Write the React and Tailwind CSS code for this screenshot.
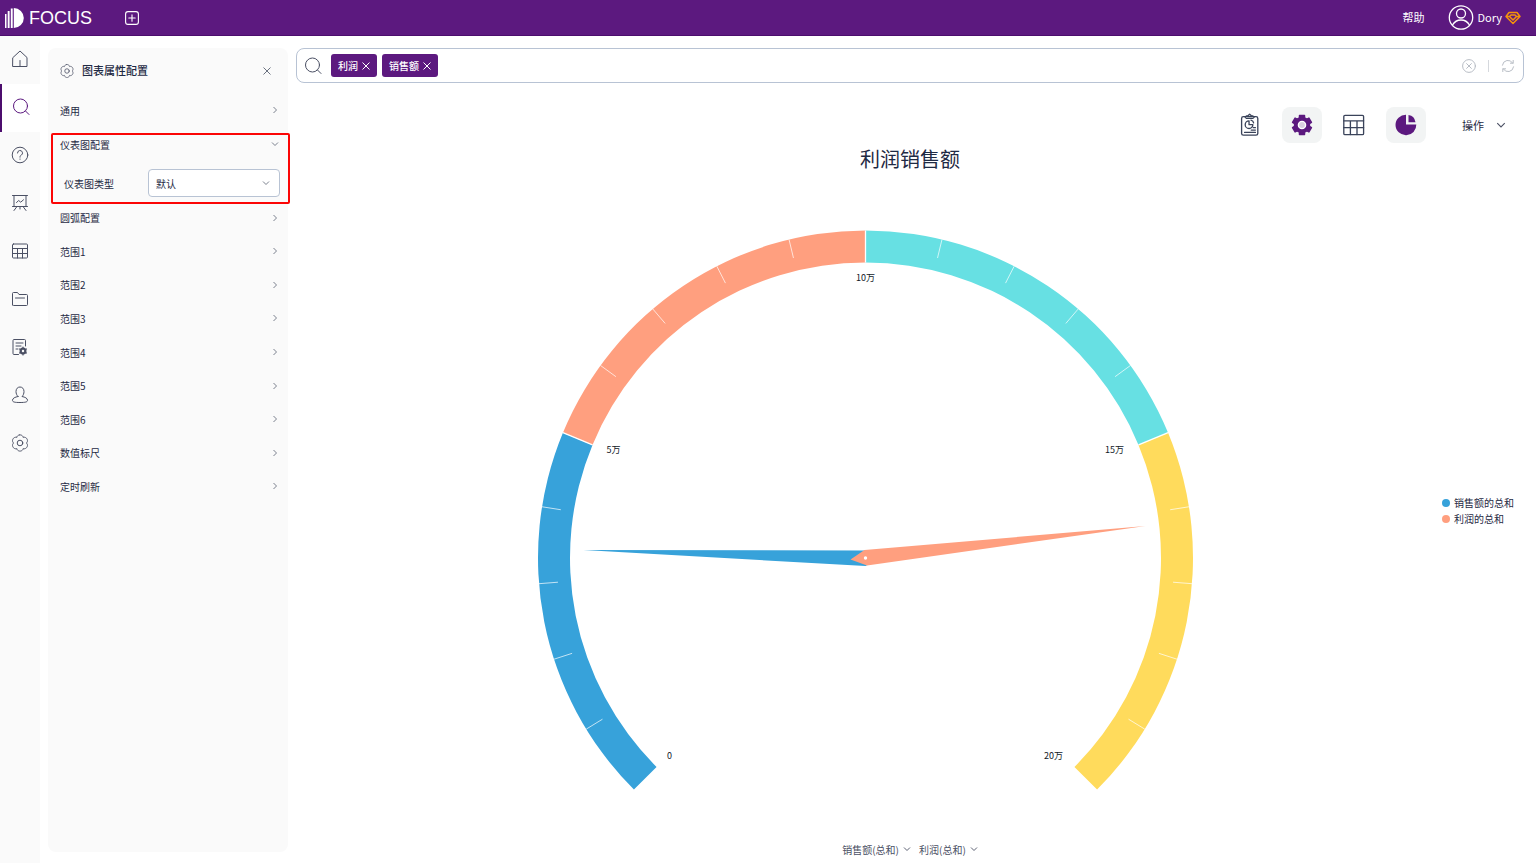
import React, { useState } from "react";

// Scalloped outline: six round lobes, first one pointing up
const scallop = (radius, depth) => {
  const points = [];
  for (let i = 0; i < 120; i++) {
    const a = (i / 120) * Math.PI * 2;
    const r = radius + depth * Math.pow(Math.abs(Math.cos(3 * a)), 0.7);
    points.push(`${(10 + r * Math.sin(a)).toFixed(2)} ${(10 - r * Math.cos(a)).toFixed(2)}`);
  }
  return `M${points.join("L")}Z`;
};

// Solid gear with six wide teeth
const teeth = (outer, root) => {
  const points = [];
  for (let i = 0; i < 6; i++) {
    [
      [-20, root],
      [-15, outer],
      [15, outer],
      [20, root],
    ].forEach(([deg, r]) => {
      const a = ((i * 60 + deg) * Math.PI) / 180;
      points.push(`${(11 + r * Math.sin(a)).toFixed(2)} ${(11 - r * Math.cos(a)).toFixed(2)}`);
    });
  }
  return `M${points.join("L")}Z`;
};

const gearOutline = scallop(6.4, 1.7);
const gearSolid = teeth(9.8, 7.6);

const Icon = ({ children, className = "size-5", strokeWidth = 1 }) => (
  <svg
    viewBox="0 0 20 20"
    className={`shrink-0 ${className}`}
    fill="none"
    stroke="currentColor"
    strokeWidth={strokeWidth}
    strokeLinecap="round"
    strokeLinejoin="round"
    aria-hidden="true"
  >
    {children}
  </svg>
);

const GearIcon = ({ className }) => (
  <Icon className={className}>
    <path d={gearOutline} />
    <circle cx="10" cy="10" r="2.8" />
  </Icon>
);

const SearchIcon = ({ className }) => (
  <Icon className={className}>
    <circle cx="9.5" cy="9" r="7" />
    <path d="m14.500 14 3.500 3.500" />
  </Icon>
);

const TableIcon = ({ className }) => (
  <Icon className={className}>
    <rect x="2.5" y="3" width="15" height="14" rx="1" />
    <path d="M2.5 7.5h15M2.5 12.5h15M7.5 7.5V17M12.5 7.5V17" />
  </Icon>
);

const Chevron = ({ down, className = "size-2" }) => (
  <svg viewBox="0 0 8 8" className={`shrink-0 ${className}`} fill="none" stroke="currentColor" strokeWidth="0.9" aria-hidden="true">
    <path d={down ? "M1 2.5 4 5.5 7 2.5" : "M2.5 1 5.5 4 2.5 7"} />
  </svg>
);

const Cross = ({ className = "size-2" }) => (
  <svg viewBox="0 0 8 8" className={`shrink-0 ${className}`} fill="none" stroke="currentColor" strokeWidth="1" aria-hidden="true">
    <path d="m.5.5 7 7M7.5.5l-7 7" />
  </svg>
);

const navItems = [
  {
    label: "首页",
    icon: (
      <Icon>
        <path d="M3 8.5 10 2l7 6.5V17.5H3ZM10 11.5v6" />
      </Icon>
    ),
  },
  { label: "搜索", active: true, icon: <SearchIcon className="size-5" /> },
  {
    label: "问答",
    icon: (
      <Icon>
        <circle cx="10" cy="10" r="7.8" />
        <path d="M7.5 8a2.5 2.5 0 1 1 3.7 2.2c-.9.5-1.2.9-1.2 2M10 14v.3" />
      </Icon>
    ),
  },
  {
    label: "看板",
    icon: (
      <Icon>
        <path d="M2.5 2.5h15M4 2.5v11M16 2.5v11M2.500 13.500h15M6.5 9.5l2.2-2 2 1.7 2.8-2.4M7 13.5l-3 4M13 13.5l3 4M10 13.5v2.5" />
      </Icon>
    ),
  },
  { label: "数据表", icon: <TableIcon className="size-5" /> },
  {
    label: "资源",
    icon: (
      <Icon>
        <path d="M2.5 16V4.5a1 1 0 0 1 1-1h4l1.5 2h7.5a1 1 0 0 1 1 1V15.5a1 1 0 0 1-1 1h-13a1 1 0 0 1-1-1M5.5 9h9" />
      </Icon>
    ),
  },
  {
    label: "任务",
    icon: (
      <Icon>
        <path d="M8.5 17.5H4a1 1 0 0 1-1-1V3.5a1 1 0 0 1 1-1h10.5a1 1 0 0 1 1 1V9M6 6h7M6 9h5M6 12h2" />
        <circle cx="13" cy="14" r="2.4" strokeWidth="2.2" />
        <path d="M13 10v8M9.6 12l6.8 4M16.4 12l-6.8 4" strokeWidth="1.2" />
        <circle cx="13" cy="14" r="1.2" fill="#fafafa" stroke="none" />
      </Icon>
    ),
  },
  {
    label: "用户",
    icon: (
      <Icon>
        <path d="M8 11.500C6.700 10.300 6 8.500 6 6.500 6 3.800 7.700 2 10 2s4 1.800 4 4.500c0 2-.7 3.800-2 5 3 .6 5.500 1.700 5.500 3.800 0 1.700-2 2.200-7.500 2.200s-7.500-.5-7.500-2.200c0-2.100 2.500-3.200 5.500-3.800Z" />
      </Icon>
    ),
  },
  { label: "设置", icon: <GearIcon className="size-5" /> },
];

const sections = [
  "圆弧配置",
  "范围1",
  "范围2",
  "范围3",
  "范围4",
  "范围5",
  "范围6",
  "数值标尺",
  "定时刷新",
];

const Header = () => (
  <header className="flex h-9 shrink-0 items-center border-b border-[#4c0d6d] bg-[#5c197f] text-white">
    <a href="#" className="flex items-center gap-[5px] pl-1" aria-label="FOCUS">
      <svg viewBox="0 0 20 20" className="size-5" fill="currentColor" aria-hidden="true">
        <path d="M1 6h1.500v14H1ZM3.700 3h1.900v17H3.700ZM6.800.5h1.900V20H6.800ZM9.800 0a10 10 0 0 1 0 20Z" />
      </svg>
      <span className="font-['Liberation_Sans',sans-serif] text-lg leading-none">FOCUS</span>
    </a>
    <button type="button" className="ml-8" aria-label="新建">
      <Icon className="size-4" strokeWidth={1.4}>
        <rect x="2" y="2" width="16" height="16" rx="3" />
        <path d="M10 6v8M6 10h8" />
      </Icon>
    </button>
    <a href="#" className="ml-auto text-[11px]">
      帮助
    </a>
    <button type="button" className="mr-[15px] ml-6 flex items-center gap-[3px] text-[11px]">
      <svg viewBox="0 0 26 26" className="size-[26px]" fill="none" stroke="currentColor" strokeWidth="1.3" aria-hidden="true">
        <circle cx="13" cy="12.500" r="11.700" />
        <circle cx="13" cy="8.500" r="4.500" />
        <path d="M4.500 20c2-3.500 5-5 8.500-5s6.500 1.500 8.500 5" />
      </svg>
      <span>Dory</span>
      <svg viewBox="0 0 16 14" className="h-3.5 w-4" fill="none" stroke="#f3920b" strokeWidth="1.5" strokeLinejoin="round" aria-hidden="true">
        <path d="M4 1.500h8l3 4-7 7-7-7ZM1 5.500h3.500L6 4h4l1.500 1.500H15M4.500 5.500 8 9l3.500-3.500" />
      </svg>
    </button>
  </header>
);

const Sidebar = () => (
  <nav className="w-10 shrink-0 bg-[#fafafa]">
    {navItems.map((item) => (
      <a
        key={item.label}
        href="#"
        aria-label={item.label}
        className={`flex h-12 items-center justify-center pb-0.5 ${
          item.active
            ? "border-l-2 border-[#4c0d6d] bg-white text-[#5c197f]"
            : "text-[#4b5064]"
        }`}
      >
        {item.icon}
      </a>
    ))}
  </nav>
);

const SectionRow = ({ label, open, className }) => (
  <button
    type="button"
    aria-expanded={!!open}
    className={`flex w-full items-center justify-between pr-[9px] pl-3 ${className}`}
  >
    <span>{label}</span>
    <Chevron down={open} className="size-2 text-[#6b7280]" />
  </button>
);

const ConfigPanel = () => {
  const [type, setType] = useState("default");

  return (
    <aside className="mt-3 mb-[11px] ml-2 w-60 shrink-0 rounded-lg bg-[#fafafa] text-[10px]">
      <div className="flex h-[45px] items-center pr-[17px] pl-[11px]">
        <GearIcon className="size-4 text-[#4b5064]" />
        <h2 className="ml-[7px] text-[11px] font-medium">图表属性配置</h2>
        <button type="button" className="ml-auto text-[#6b7280]" aria-label="关闭">
          <Cross />
        </button>
      </div>
      <SectionRow label="通用" className="h-[34px]" />
      <section className="relative">
        <SectionRow label="仪表图配置" open className="h-[34px]" />
        <div className="flex items-center justify-between pt-2 pr-2 pb-1 pl-4">
          <label htmlFor="gauge-type">仪表图类型</label>
          <div className="relative">
            <select
              id="gauge-type"
              value={type}
              onChange={(e) => setType(e.target.value)}
              className="h-7 w-33 appearance-none rounded-sm border border-[#b8c3d4] bg-white px-[7px]"
            >
              <option value="default">默认</option>
            </select>
            <Chevron down className="pointer-events-none absolute top-2.5 right-2.5 size-2 text-[#6b7280]" />
          </div>
        </div>
        <div className="pointer-events-none absolute top-1.5 -right-0.5 -bottom-[3px] left-[3px] rounded-xs border-2 border-[#fb0505]" />
      </section>
      <div className="flex h-[302px] flex-col">
        {sections.map((label) => (
          <SectionRow key={label} label={label} className="flex-1" />
        ))}
      </div>
    </aside>
  );
};

const SearchBar = () => {
  const [tags, setTags] = useState(["利润", "销售额"]);
  const [query, setQuery] = useState("");

  return (
    <div className="flex h-[35px] shrink-0 items-center rounded-lg border border-[#b8c3d4] bg-white pr-[7px] pl-1.5">
      <SearchIcon className="size-5 text-[#4b5064]" />
      <div className="ml-2 flex gap-[5px]">
        {tags.map((tag) => (
          <span
            key={tag}
            className="flex h-[23px] items-center gap-1 rounded-[3px] bg-[#5c197f] px-[7px] text-[10px] font-medium text-white"
          >
            {tag}
            <button
              type="button"
              aria-label={`移除${tag}`}
              onClick={() => setTags(tags.filter((t) => t !== tag))}
            >
              <Cross />
            </button>
          </span>
        ))}
      </div>
      <input
        type="text"
        aria-label="搜索"
        value={query}
        onChange={(e) => setQuery(e.target.value)}
        className="mx-2 min-w-0 flex-1 text-[10px] outline-none"
      />
      <button type="button" className="text-[#b5bac2]" aria-label="清空" onClick={() => setTags([])}>
        <Icon className="size-4" strokeWidth={1.2}>
          <circle cx="10" cy="10" r="8" />
          <path d="m7 7 6 6M13 7l-6 6" />
        </Icon>
      </button>
      <span className="mx-[11px] h-3 w-px bg-[#d5d8dd]" />
      <button type="button" className="text-[#b5bac2]" aria-label="刷新">
        <Icon className="size-4" strokeWidth={1.2}>
          <path d="M3 9a7 7 0 0 1 13-2.500M17 11a7 7 0 0 1-13 2.500M16.500 3v3.500H13M3.500 17v-3.500H7" />
        </Icon>
      </button>
    </div>
  );
};

const ToolButton = ({ label, active, children }) => (
  <button
    type="button"
    aria-label={label}
    aria-pressed={!!active}
    className={`flex h-9 w-10 items-center justify-center rounded-lg ${
      active ? "bg-[#f2f4f4] text-[#5c197f]" : "text-[#3a435a]"
    }`}
  >
    {children}
  </button>
);

const Toolbar = () => (
  <div className="mt-6 flex shrink-0 items-center justify-end gap-3">
    <ToolButton label="看板">
      <Icon className="size-6" strokeWidth={1.1}>
        <rect x="3" y="3" width="13.500" height="15.500" rx="1.500" />
        <path d="M6 3.500 7 2.500h1L9.700 1l1.700 1.500h1l1 1-1 1H7ZM9.200 6.500a3.200 3.200 0 1 0 3.200 3.200H9.200ZM10.800 6c1.200.3 2 1 2.200 2.200M12.800 12.200h1.700M11 14.200h3.500M5.500 16.200h9" />
      </Icon>
    </ToolButton>
    <ToolButton label="图表配置" active>
      <svg viewBox="0 0 22 22" className="size-[22px]" fill="currentColor" aria-hidden="true">
        <path d={gearSolid} stroke="currentColor" strokeWidth="1.4" strokeLinejoin="round" />
        <circle cx="11" cy="11" r="3.600" fill="#d9cfe0" stroke="#fff" strokeWidth="1.400" />
      </svg>
    </ToolButton>
    <ToolButton label="数据表">
      <Icon className="size-6" strokeWidth={1.1}>
        <rect x="1.500" y="2" width="16.500" height="16" rx="1" />
        <path d="M1.500 6.500h16.500M1.500 12.200h16.500M7 6.500V18M12.500 6.500V18" />
      </Icon>
    </ToolButton>
    <ToolButton label="图形" active>
      <svg viewBox="0 0 22 22" className="size-[22px]" fill="currentColor" aria-hidden="true">
        <path d="M11 .8v9.700h10.300A10.400 10.200 0 1 1 11 .8Z" />
        <path d="M13.500 1a8.500 8.500 0 0 1 7 7.200h-7Z" />
      </svg>
    </ToolButton>
    <button type="button" className="ml-6 flex items-center gap-3 pr-[18px] text-[11px]">
      操作
      <Chevron down className="size-[10px] text-[#4b5064]" />
    </button>
  </div>
);

const OUTER = 327.5;
const INNER = 295.5;

const polar = (fraction, r) => {
  const a = ((-135 + 270 * fraction) * Math.PI) / 180;
  return [r * Math.sin(a), -r * Math.cos(a)];
};

const arcPath = (from, to) => {
  const [x1, y1] = polar(from, OUTER);
  const [x2, y2] = polar(to, OUTER);
  const [x3, y3] = polar(to, INNER);
  const [x4, y4] = polar(from, INNER);
  return `M${x1} ${y1}A${OUTER} ${OUTER} 0 0 1 ${x2} ${y2}L${x3} ${y3}A${INNER} ${INNER} 0 0 0 ${x4} ${y4}Z`;
};

const ranges = [
  { from: 0, to: 0.25, color: "#37a2da" },
  { from: 0.25, to: 0.5, color: "#ff9f7f" },
  { from: 0.5, to: 0.75, color: "#67e0e3" },
  { from: 0.75, to: 1, color: "#ffdb5c" },
];

const scaleLabels = [
  { text: "0", x: -196, y: 201 },
  { text: "5万", x: -252, y: -105 },
  { text: "10万", x: 0, y: -277 },
  { text: "15万", x: 249, y: -105 },
  { text: "20万", x: 188, y: 201 },
];

const Gauge = () => (
  <svg viewBox="0 0 700 668" className="h-full w-full" role="img" aria-label="利润销售额">
    <g transform="translate(350.5 387)">
      {ranges.map((range) => (
        <path key={range.color} d={arcPath(range.from, range.to)} fill={range.color} />
      ))}
      {Array.from({ length: 19 }, (_, i) => i + 1).map((i) => {
        const major = i % 5 === 0;
        const [x1, y1] = polar(i / 20, OUTER);
        const [x2, y2] = polar(i / 20, major ? INNER : OUTER - 19);
        return (
          <line
            key={i}
            x1={x1}
            y1={y1}
            x2={x2}
            y2={y2}
            stroke="#fff"
            strokeWidth={major ? 1.3 : 0.7}
          />
        );
      })}
      {scaleLabels.map((label) => (
        <text key={label.text} x={label.x} y={label.y} textAnchor="middle" fill="#111827" className="text-[9px]">
          {label.text}
        </text>
      ))}
      <path d="M-282-8 0-7.500 15 .5 0 8Z" fill="#37a2da" />
      <path d="M280-32-1-8-15 1.500 1.500 7.500Z" fill="#ff9f7f" />
      <circle r="1.700" fill="#fff" />
    </g>
  </svg>
);

const Legend = () => (
  <ul className="w-[90px] shrink-0 self-center pt-3 pl-2 text-[10px] leading-4">
    <li className="flex items-center gap-1 whitespace-nowrap">
      <span className="size-2 shrink-0 rounded-full bg-[#37a2da]" />
      销售额的总和
    </li>
    <li className="flex items-center gap-1 whitespace-nowrap">
      <span className="size-2 shrink-0 rounded-full bg-[#ff9f7f]" />
      利润的总和
    </li>
  </ul>
);

const App = () => {
  return (
    <div className="flex h-screen flex-col bg-white font-['Noto_Sans_CJK_SC',sans-serif] text-[#1f2a44]">
      <Header />
      <div className="flex min-h-0 flex-1">
        <Sidebar />
        <ConfigPanel />
        <main className="flex min-w-0 flex-1 flex-col pt-3 pr-3 pb-1 pl-2">
          <SearchBar />
          <Toolbar />
          <h1 className="mt-1 shrink-0 text-center text-xl leading-6">利润销售额</h1>
          <div className="flex min-h-0 flex-1">
            <div className="min-w-0 flex-1">
              <Gauge />
            </div>
            <Legend />
          </div>
          <div className="flex h-5 shrink-0 items-center justify-center gap-2 text-[10px] text-[#4b5064]">
            <button type="button" className="flex items-center gap-1">
              销售额(总和)
              <Chevron down />
            </button>
            <button type="button" className="flex items-center gap-1">
              利润(总和)
              <Chevron down />
            </button>
          </div>
        </main>
      </div>
    </div>
  );
};

export default App;
